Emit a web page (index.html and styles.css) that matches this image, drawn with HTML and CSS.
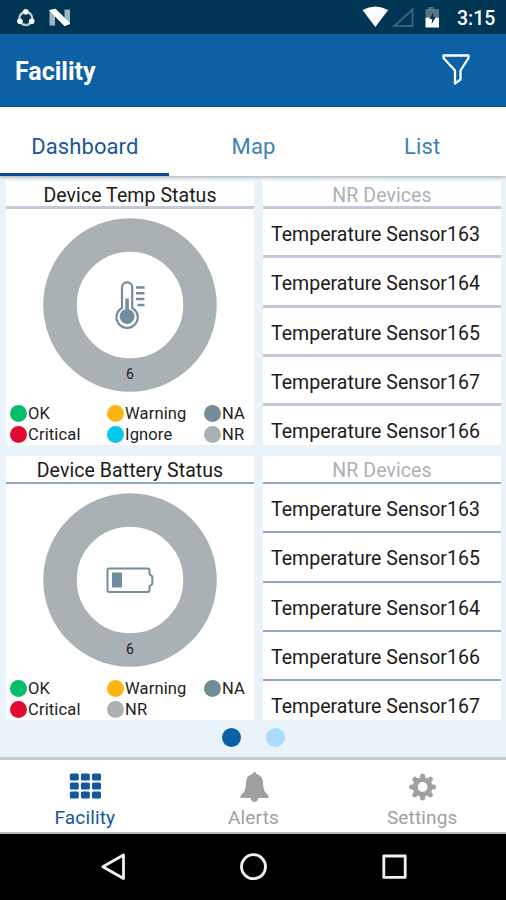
FILE: index.html
```html
<!DOCTYPE html>
<html lang="en">
<head>
<meta charset="utf-8">
<title>Facility</title>
<link rel="stylesheet" href="styles.css">
</head>
<body>
<div class="screen">
  <div class="status">
    <svg class="notif" width="80" height="34" viewBox="0 0 80 34">
      <circle cx="25.8" cy="18.5" r="6.5" fill="none" stroke="#b9c9d6" stroke-width="2.4"/>
      <g fill="#fff"><circle cx="25.8" cy="11.8" r="2.8"/><circle cx="19.9" cy="21.3" r="2.8"/><circle cx="31.7" cy="21.3" r="2.8"/></g>
      <path d="M49.500 10.500 55 9.500V25.500H49.500ZM64.500 9.500H70V23.500L64.500 25.500Z" fill="#9fb4c1"/>
      <path d="M49.500 10.500 55.500 9.200 70 23.500 64.500 25.700Z" fill="#fff" stroke="#fff"/>
    </svg>
    <svg class="signals" width="90" height="34" viewBox="0 0 90 34">
      <path d="M2.500 10Q15.300 3 28.200 10L15.300 27Z" fill="#fff"/>
      <path d="M34.500 26 52.500 9.500V26Z" fill="none" stroke="#3b6079" stroke-width="2"/>
      <path d="M68.500 7h5v2h5.500v8.500H65.500V9h3Z" fill="#557488"/>
      <path d="M65.500 17.500H79V27.500H65.500Z" fill="#fff"/>
      <path d="M73.500 12 69.500 19h2.800l-.8 5.500 4.300-7.400h-2.800Z" fill="#003554"/>
    </svg>
    <span class="clock">3:15</span>
  </div>
  <header class="appbar">
    <h1>Facility</h1>
    <svg width="30" height="34" viewBox="0 0 30 34" fill="none" stroke="#fff" stroke-width="2.300" stroke-linejoin="round"><path d="M2.500 2.500H27.500V5L19.500 17.500V26.500L14 30.500V17.500L2.500 5Z"/></svg>
  </header>
  <nav class="tabs">
    <span class="tab active"><span>Dashboard</span></span>
    <span class="tab"><span>Map</span></span>
    <span class="tab"><span>List</span></span>
  </nav>
  <main class="content">
    <div class="pair first">
      <section class="card">
        <h2><span>Device Temp Status</span></h2>
        <svg class="donut" width="174" height="174" viewBox="0 0 174 174">
          <circle cx="87" cy="87" r="70" fill="none" stroke="#a9b1b5" stroke-width="33.500"/>
          <g transform="translate(-43 -218.500)" fill="none" stroke="#738d9c" stroke-width="2.200">
            <path d="M122 308.500V288a5.100 5.100 0 0 1 10.200 0V308.500A10.600 10.600 0 1 1 122 308.500Z"/>
            <circle cx="127.100" cy="317" r="7.500" fill="#738d9c" stroke="none"/>
            <path d="M127.100 299V316" stroke-width="3.600"/>
            <path d="M136 288H144.500M136 293.800H144.500M136 299.600H144.500M137.500 305.500H144.500" stroke-width="2.500"/>
          </g>
          <text x="87" y="161" class="count">6</text>
        </svg>
        <div class="legend">
          <span class="item ok">OK</span><span class="item warning">Warning</span><span class="item na">NA</span>
          <span class="item critical">Critical</span><span class="item ignore">Ignore</span><span class="item nr">NR</span>
        </div>
      </section>
      <section class="card">
        <h2 class="muted"><span>NR Devices</span></h2>
        <ul>
          <li>Temperature Sensor163</li>
          <li>Temperature Sensor164</li>
          <li>Temperature Sensor165</li>
          <li>Temperature Sensor167</li>
          <li>Temperature Sensor166</li>
        </ul>
      </section>
    </div>
    <div class="pair second">
      <section class="card">
        <h2><span>Device Battery Status</span></h2>
        <svg class="donut" width="174" height="174" viewBox="0 0 174 174">
          <circle cx="87" cy="87" r="70" fill="none" stroke="#a9b1b5" stroke-width="33.500"/>
          <g transform="translate(-43 -493.500)">
            <path d="M109 569H147.500Q149.500 569 149.500 571V574.500L152.300 577V584.500L149.500 587V590.500Q149.500 592.500 147.500 592.500H109Q107.500 592.500 107.500 590.500V571Q107.500 569 109 569Z" fill="none" stroke="#738d9c" stroke-width="2"/>
            <rect x="112" y="573" width="10" height="15" fill="#738d9c"/>
          </g>
          <text x="87" y="161" class="count">6</text>
        </svg>
        <div class="legend">
          <span class="item ok">OK</span><span class="item warning">Warning</span><span class="item na">NA</span>
          <span class="item critical">Critical</span><span class="item nr">NR</span>
        </div>
      </section>
      <section class="card">
        <h2 class="muted"><span>NR Devices</span></h2>
        <ul>
          <li>Temperature Sensor163</li>
          <li>Temperature Sensor165</li>
          <li>Temperature Sensor164</li>
          <li>Temperature Sensor166</li>
          <li>Temperature Sensor167</li>
        </ul>
      </section>
    </div>
    <div class="pager"><i class="on"></i><i></i></div>
  </main>
  <nav class="bottom">
    <span class="nav active">
      <svg width="32" height="32" viewBox="0 0 32 32" fill="currentColor"><rect x=".8" y="3.500" width="9" height="7" rx="1.500"/><rect x="11.900" y="3.500" width="9" height="7" rx="1.500"/><rect x="23" y="3.500" width="9" height="7" rx="1.500"/><rect x=".8" y="12.600" width="9" height="7" rx="1.500"/><rect x="11.900" y="12.600" width="9" height="7" rx="1.500"/><rect x="23" y="12.600" width="9" height="7" rx="1.500"/><rect x=".8" y="21.600" width="9" height="7" rx="1.500"/><rect x="11.900" y="21.600" width="9" height="7" rx="1.500"/><rect x="23" y="21.600" width="9" height="7" rx="1.500"/></svg>
      <span>Facility</span>
    </span>
    <span class="nav">
      <svg width="32" height="32" viewBox="0 0 32 32" fill="currentColor"><path d="M16.500 2Q18.500 2 18.500 4Q25 5.500 25 13Q25 22 30.500 25.500V28H20.500Q19.500 32 16.500 32T12.500 28H2.500V25.500Q8 22 8 13Q8 5.500 14.500 4Q14.500 2 16.500 2Z"/></svg>
      <span>Alerts</span>
    </span>
    <span class="nav">
      <svg width="32" height="32" viewBox="0 0 32 32"><g fill="none" stroke="currentColor" transform="translate(.6 0)"><circle cx="16" cy="17" r="7.400" stroke-width="5"/><path stroke-width="5" stroke-linecap="round" d="M16 6v2M16 26v2M5 17h2M25 17h2M8.200 9.200l1.400 1.400M22.400 23.400l1.400 1.400M23.800 9.200l-1.400 1.400M9.600 23.400l-1.400 1.400"/></g></svg>
      <span>Settings</span>
    </span>
  </nav>
  <div class="system">
    <svg width="506" height="66" viewBox="0 0 506 66" fill="none" stroke="#f2f2f2" stroke-width="2.800" stroke-linejoin="round"><path d="M123.500 21V44.500L102.800 32.700Z"/><circle cx="253.500" cy="32.700" r="12"/><rect x="383.800" y="22" width="21.400" height="21.400"/></svg>
  </div>
</div>
</body>
</html>
```
FILE: styles.css
```css
* { box-sizing: border-box; }
body { margin: 0; font-family: Roboto, "Liberation Sans", sans-serif; background: #000; }
.screen { width: 506px; height: 900px; display: flex; flex-direction: column; overflow: hidden; }
.screen > * { flex: none; }
svg { display: block; flex: none; }
.status { height: 34px; background: #003554; display: flex; align-items: center; }
.signals { margin-left: 280px; }
.clock { color: #fff; font-size: 19.5px; font-weight: 500; line-height: 34px; margin: 4px 0 0 7px; white-space: nowrap; }
.appbar { height: 73px; background: #0b61a3; display: flex; align-items: center; justify-content: space-between; padding: 0 35px 0 15px; border-bottom: 1px solid #09558f; }
.appbar h1 { margin: 4px 0 0; color: #fff; font-size: 25px; font-weight: 700; line-height: 30px; }
.tabs { height: 69px; background: #fff; display: flex; box-shadow: 0 2px 2px #bfc3c7; position: relative; }
.tab { flex: 1; display: flex; justify-content: center; align-items: center; padding: 13px 0 0 1px; color: #3c82b8; font-size: 22px; letter-spacing: .1px; border-bottom: 3px solid transparent; }
.tab.active { color: #1a56a0; border-bottom-color: #0e4796; }
.content { height: 580.5px; background: #eaf3fa; padding: 5px 5px 0 6px; }
.pair { display: grid; grid-template-columns: 248px 238px; column-gap: 9px; height: 263.5px; --rule: #c2cadb; --rule-w: 3px; }
.pair.second { margin-top: 11.500px; --rule: #8ea9c8; --rule-w: 2px; }
.card { background: #fff; height: 263.5px; overflow: hidden; }
h2 { margin: 0; height: 28px; border-bottom: var(--rule-w) solid var(--rule); font-size: 19.5px; font-weight: 400; line-height: 29px; text-align: center; color: #1b1b1b; letter-spacing: .07px; white-space: nowrap; }
.muted { color: #adb1b5; }
.donut { margin: 9px auto 0 37px; }
.count { font-size: 14px; text-anchor: middle; fill: #1b1b1b; }
.legend { display: grid; grid-template-columns: 97px 97px 50px; grid-auto-rows: 21px; margin: 10.500px 0 0 4px; }
.item { display: flex; align-items: center; font-size: 16.500px; color: #222; white-space: nowrap; letter-spacing: .15px; line-height: 21px; }
.item::before { content: ""; width: 17px; height: 17px; border-radius: 50%; margin-right: 1px; flex: none; background: var(--dot); }
.ok { --dot: #07bd6c; }
.warning { --dot: #fdb515; }
.na { --dot: #738d98; }
.critical { --dot: #e20a32; }
.ignore { --dot: #08c8ea; }
.nr { --dot: #a9b1b5; }
ul { margin: 0; padding: 0; list-style: none; }
li { height: 49.250px; border-bottom: var(--rule-w) solid var(--rule); padding-left: 8px; font-size: 19.5px; line-height: 51.500px; color: #1b1b1b; letter-spacing: .03px; white-space: nowrap; }
.pager { display: flex; gap: 25px; margin: 8px 0 0 216px; }
.pager i { width: 19px; height: 19px; border-radius: 50%; background: #aadcfd; }
.pager .on { background: #0c60a5; }
.bottom { height: 77.500px; background: #fff; border-top: 3px solid #c4ccd5; border-bottom: 2px solid #b9b9b9; display: flex; }
.nav { flex: 1; display: flex; flex-direction: column; align-items: center; padding-top: 10px; color: #a0a0a0; font-size: 19px; letter-spacing: .15px; line-height: 32px; padding-left: 1px; }
.nav.active { color: #1357a0; }
.system { height: 66px; background: #000; }
```
